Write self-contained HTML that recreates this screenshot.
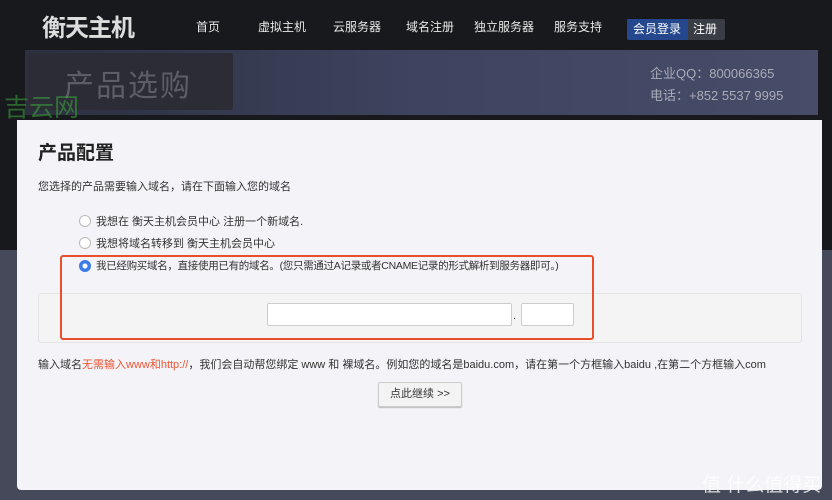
<!DOCTYPE html>
<html><head><meta charset="utf-8"><style>
body{margin:0;width:832px;height:500px;overflow:hidden;position:relative;background:#46495a;font-family:"Liberation Sans","Noto Sans CJK SC",sans-serif}
.top{position:absolute;left:0;top:0;width:832px;height:250px;background:#18191d}
.logo{position:absolute;left:42px;top:8px;color:#ddd;font-size:24px;font-weight:bold;letter-spacing:-1px}
.nav{position:absolute;top:18px;color:#e8e8e8;font-size:12px}
.login{position:absolute;left:627px;top:19px;width:98px;height:21px;background:#3a3d46;border-radius:2px}
.login span{position:absolute;top:0;line-height:21px;font-size:12px;color:#fff}
.banner{position:absolute;left:25px;top:50px;width:793px;height:65px;background:linear-gradient(90deg,#2c2f3e,#3e4460 50%,#474c68);}
.tag{position:absolute;left:28px;top:53px;height:57px;background:#2b2c35;border-radius:3px;width:205px}
.tag span{position:absolute;left:36px;top:8px;font-size:30px;color:#5c5e66;letter-spacing:2px}
.qq{position:absolute;left:650px;top:63px;color:#a9acb8;font-size:13px;line-height:22px}
.wm{position:absolute;left:4px;top:88px;color:rgba(60,170,60,.55);font-size:25px}
.panel{position:absolute;left:17px;top:120px;width:805px;height:370px;background:#f3f3f8;border-radius:0 0 4px 4px}
h1{position:absolute;left:38px;top:138px;margin:0;font-size:19px;color:#222;font-weight:bold}
.t{position:absolute;font-size:11px;color:#333;white-space:nowrap}
.r{position:absolute;left:79px;width:10px;height:10px;border:1px solid #bbb;border-radius:50%;background:#fff}
.box{position:absolute;left:38px;top:293px;width:762px;height:48px;background:#f4f4f4;border:1px solid #e4e4e4;border-radius:3px}
.in{position:absolute;top:303px;height:21px;background:#fff;border:1px solid #ccc;border-radius:2px}
.red{position:absolute;left:60px;top:255px;width:530px;height:81px;border:2px solid #e8502d;border-radius:3px}
.btn{position:absolute;left:378px;top:382px;width:82px;height:23px;background:#f3f3f3;border:1px solid #ccc;border-radius:2px;font-size:11px;text-align:center;line-height:23px;color:#333;box-shadow:0 1px 1px #bbb}
</style></head><body>
<div class="top"></div>
<div class="logo">衡天主机</div>
<div class="nav" style="left:196px">首页</div>
<div class="nav" style="left:258px">虚拟主机</div>
<div class="nav" style="left:333px">云服务器</div>
<div class="nav" style="left:406px">域名注册</div>
<div class="nav" style="left:474px">独立服务器</div>
<div class="nav" style="left:554px">服务支持</div>
<div class="login"><div style="position:absolute;left:0;top:0;width:61px;height:21px;background:#24478e;border-radius:2px 0 0 2px"></div><span style="left:6px">会员登录</span><span style="left:66px">注册</span></div>
<div class="banner"></div>
<div class="tag"><span>产品选购</span></div>
<div class="qq">企业QQ：800066365<br>电话：+852 5537 9995</div>
<div class="wm">吉云网</div>
<div class="panel"></div>
<h1>产品配置</h1>
<div class="t" style="left:38px;top:178px">您选择的产品需要输入域名，请在下面输入您的域名</div>
<div class="r" style="top:215px"></div><div class="t" style="left:96px;top:213px">我想在 衡天主机会员中心 注册一个新域名.</div>
<div class="r" style="top:237px"></div><div class="t" style="left:96px;top:235px">我想将域名转移到 衡天主机会员中心</div>
<div class="r" style="top:260px;border:1px solid #3b7be8;background:radial-gradient(circle,#fff 2px,#3b7be8 3px)"></div><div class="t" style="left:96px;top:258px;font-size:10.5px;letter-spacing:-0.3px">我已经购买域名，直接使用已有的域名。(您只需通过A记录或者CNAME记录的形式解析到服务器即可。)</div>
<div class="box"></div>
<div class="in" style="left:267px;width:243px"></div>
<div class="t" style="left:513px;top:310px">.</div>
<div class="in" style="left:521px;width:51px"></div>
<div class="red"></div>
<div class="t" style="left:38px;top:356px">输入域名<span style="color:#e53">无需输入www和http://</span>，我们会自动帮您绑定 www 和 裸域名。例如您的域名是baidu.com，请在第一个方框输入baidu ,在第二个方框输入com</div>
<div class="btn">点此继续 &gt;&gt;</div>
<div style="position:absolute;left:702px;top:470px;font-size:19px;color:rgba(255,255,255,.8)">值 什么值得买</div>
</body></html>
